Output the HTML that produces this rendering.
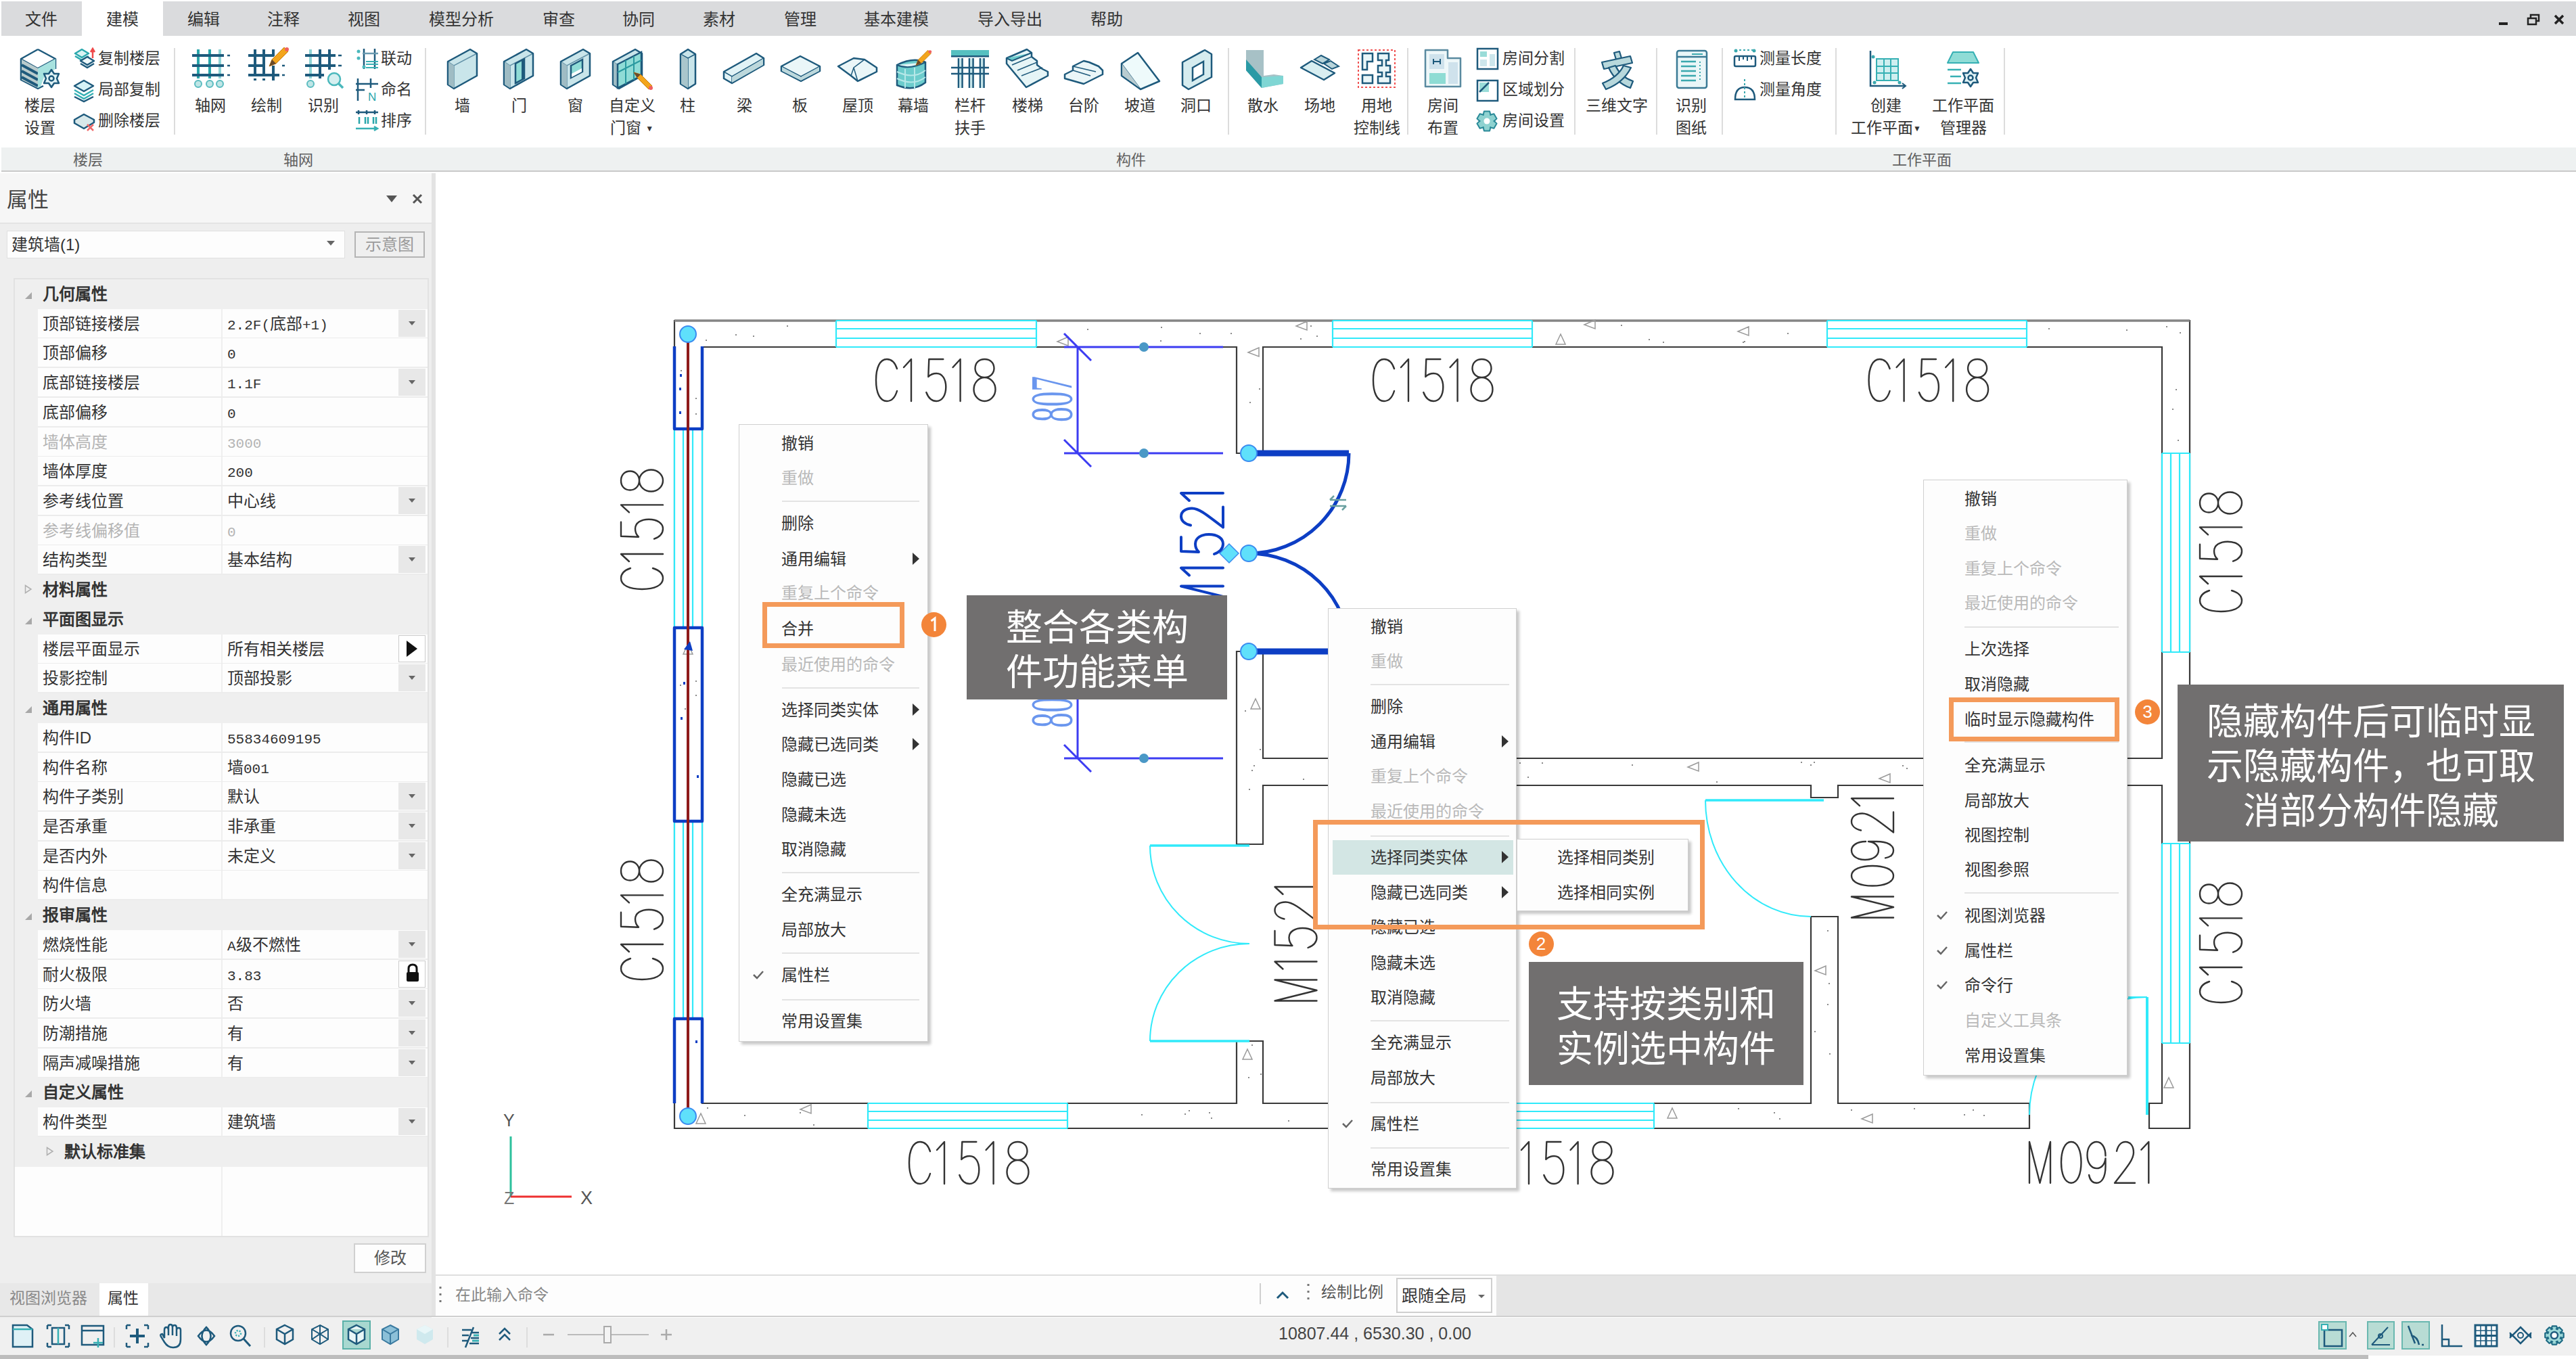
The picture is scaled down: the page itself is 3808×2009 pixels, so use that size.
<!DOCTYPE html>
<html lang="zh-CN"><head><meta charset="utf-8">
<style>
*{margin:0;padding:0;box-sizing:border-box}
html,body{width:3808px;height:2009px;overflow:hidden;background:#fff;font-family:"Liberation Sans",sans-serif;color:#333}
.a{position:absolute}
.t{position:absolute;white-space:nowrap;line-height:1}
#tabs{left:0;top:0;width:3808px;height:54px;background:#fff}
#tabbar{left:2px;top:2px;width:3806px;height:51px;background:#dadbdd}
.tab{position:absolute;top:17px;font-size:24px;color:#333;white-space:nowrap;line-height:24px;font-weight:500}
#ribbon{left:0;top:53px;width:3808px;height:165px;background:#fff}
#grpbar{left:2px;top:218px;width:3806px;height:36px;background:#eef1f1;border-bottom:2px solid #c9c9c9}
.gl{position:absolute;top:226px;font-size:22px;color:#606060;line-height:22px;white-space:nowrap}
.rl{position:absolute;font-size:23px;color:#333;line-height:23px;white-space:nowrap;text-align:center;font-weight:500}
.sep{position:absolute;top:71px;width:2px;height:128px;background:#dcdcdc}
#panel{left:0;top:256px;width:638px;height:1692px;background:#eeeeee}
#phead{left:0;top:256px;width:638px;height:75px;background:#f6f6f6;border-bottom:2px solid #e4e4e4}
#split{left:638px;top:256px;width:6px;height:1690px;background:#e3e3e3}
#canvas{left:644px;top:256px;width:3164px;height:1628px;background:#fff}
.row{position:absolute;left:56px;width:576px;height:42px;background:#fdfdfd}
.cat{position:absolute;left:22px;width:610px;height:44px;background:#efefef}
.pl{position:absolute;left:63px;font-size:24px;line-height:24px;color:#333;white-space:nowrap;font-weight:500}
.pv{position:absolute;left:336px;font-size:24px;line-height:24px;color:#333;white-space:nowrap;font-weight:500}
.pc{position:absolute;left:63px;font-size:24px;line-height:24px;color:#333;font-weight:bold;white-space:nowrap}
.dd{position:absolute;left:589px;width:40px;height:40px;background:#e8e8e8}
.dd:after{content:"";position:absolute;left:15px;top:17px;border-left:5px solid transparent;border-right:5px solid transparent;border-top:6px solid #666}
#cmd{left:644px;top:1884px;width:3164px;height:63px;background:#fdfdfd;border-top:2px solid #dcdcdc;border-bottom:2px solid #c9c9c9}
#status{left:0;top:1948px;width:3808px;height:56px;background:#f0f0f0}
#sbot{left:0;top:2003px;width:3501px;height:6px;background:#bdbdbd}
</style></head><body>

<div id="tabs" class="a"></div>
<div id="tabbar" class="a"></div>
<div class="a" style="left:121px;top:2px;width:120px;height:52px;background:#fff"></div>
<div class="tab" style="left:37px">文件</div>
<div class="tab" style="left:157px">建模</div>
<div class="tab" style="left:277px">编辑</div>
<div class="tab" style="left:395px">注释</div>
<div class="tab" style="left:514px">视图</div>
<div class="tab" style="left:634px">模型分析</div>
<div class="tab" style="left:802px">审查</div>
<div class="tab" style="left:920px">协同</div>
<div class="tab" style="left:1039px">素材</div>
<div class="tab" style="left:1159px">管理</div>
<div class="tab" style="left:1277px">基本建模</div>
<div class="tab" style="left:1445px">导入导出</div>
<div class="tab" style="left:1612px">帮助</div>

<div id="ribbon" class="a"></div>
<div id="grpbar" class="a"></div>
<div class="gl" style="left:108px">楼层</div>
<div class="gl" style="left:419px">轴网</div>
<div class="gl" style="left:1650px">构件</div>
<div class="gl" style="left:2797px">工作平面</div>

<div id="panel" class="a"></div>
<div id="phead" class="a"></div>
<div id="split" class="a"></div>
<div id="canvas" class="a"></div>
<div id="cmd" class="a"></div>
<div id="status" class="a"></div>
<div id="sbot" class="a"></div>

<svg class="a" style="left:0;top:0" width="3808" height="256" viewBox="0 0 3808 256">

<!-- 楼层设置 -->
<g transform="translate(30,72)">
<path d="M26,1 L52,15 L52,30 M26,1 L1,15 L1,46 L26,59 L34,55" fill="none" stroke="#1e5a7c" stroke-width="2.5" stroke-linejoin="round"/>
<path d="M1,15 L26,29 L52,15" fill="none" stroke="#1e5a7c" stroke-width="2"/>
<path d="M2,16 L26,29 L26,58 L2,46Z" fill="#b9cbcc"/>
<path d="M2,24 L26,37 M2,33 L26,46 M2,42 L26,55" stroke="#1e5a7c" stroke-width="4"/>
<path d="M26,29 L52,15 L52,30 L36,40 L30,56 L26,58Z" fill="#a7e2df"/>
<g transform="translate(46,44)"><path d="M0,-13 L4,-7 L11,-7 L8,0 L11,7 L4,7 L0,13 L-4,7 L-11,7 L-8,0 L-11,-7 L-4,-7Z" fill="#dff2f5" stroke="#1e5a7c" stroke-width="2.5" stroke-linejoin="round"/><circle r="3.5" fill="none" stroke="#1e5a7c" stroke-width="2.5"/></g>
</g>
<!-- small floor icons -->
<g transform="translate(108,70)">
<path d="M3,9 L13,3 L23,9 L13,15Z M3,13 L13,19 L23,13" fill="#d9f3f3" stroke="#2aa8ad" stroke-width="2.5" stroke-linejoin="round"/>
<path d="M11,20 L21,14 L31,20 L21,26Z M11,24 L21,30 L31,24" fill="#eef8fa" stroke="#1e5a7c" stroke-width="2.5" stroke-linejoin="round"/>
<path d="M29,16 L29,3 M26,7 L29,2 L32,7" stroke="#ef4a4a" stroke-width="2.5" fill="none"/>
</g>
<g transform="translate(108,117)">
<path d="M2,10 L16,2 L30,10 L16,18Z" fill="#d6f2f6" stroke="#1e5a7c" stroke-width="2.5" stroke-linejoin="round"/>
<path d="M2,16 L16,24 L30,16 M2,21 L16,29 L30,21" fill="none" stroke="#36b0b4" stroke-width="2.5"/>
<path d="M2,26 L16,33 L30,26" fill="none" stroke="#1e5a7c" stroke-width="2.5"/>
</g>
<g transform="translate(108,164)">
<path d="M2,13 L16,5 L31,13 L31,17 L16,26 L2,18Z" fill="#d8e8ea" stroke="#1e5a7c" stroke-width="2.5" stroke-linejoin="round"/>
<path d="M21,20 L30,29 M30,20 L21,29" stroke="#f06a6a" stroke-width="2.5"/>
</g>
<rect x="257" y="71" width="2" height="128" fill="#dcdcdc"/>
<!-- 轴网 -->
<g transform="translate(284,73)" stroke-width="4">
<path d="M9,0 V43 M26,0 V43" stroke="#2aa6ab"/><path d="M41,0 V43" stroke="#8fd4d6"/>
<path d="M0,9 H47 M0,24 H47 M0,38 H47" stroke="#1e5a7c"/>
<path d="M52,9 H56 M52,24 H56 M52,38 H56" stroke="#1e5a7c" stroke-width="2.5"/>
<circle cx="9" cy="51" r="5" fill="#bfe6e6" stroke="#5bbcc0" stroke-width="2"/><circle cx="26" cy="51" r="5" fill="#bfe6e6" stroke="#5bbcc0" stroke-width="2"/><circle cx="41" cy="51" r="5" fill="#bfe6e6" stroke="#5bbcc0" stroke-width="2"/>
</g>
<!-- 绘制 -->
<g transform="translate(367,73)" stroke-width="4">
<path d="M10,0 V46 M23,0 V46 M37,0 V10 M37,24 V46" stroke="#1e5a7c" stroke-dasharray="40 3 4 3"/>
<path d="M0,9 H38 M0,24 H25 M0,38 H46" stroke="#1e5a7c"/>
<path d="M50,24 H54 M50,38 H54" stroke="#1e5a7c" stroke-width="2.5"/>
<g transform="translate(31,3)"><path d="M0,22 L4,12 L22,-6 L28,0 L10,18 Z" fill="#f3a51c" stroke="#c77d10" stroke-width="1"/><path d="M0,22 L4,12 L10,18Z" fill="#6b4a2a"/><circle cx="26" cy="-3" r="3" fill="#f06060"/></g>
</g>
<!-- 识别 -->
<g transform="translate(451,73)" stroke-width="4">
<path d="M8,0 V43" stroke="#8fd4d6"/><path d="M22,0 V43 M36,0 V30" stroke="#1e5a7c"/>
<path d="M0,9 H45 M0,24 H45 M0,38 H28" stroke="#1e5a7c"/>
<path d="M49,9 H54 M49,24 H54" stroke="#1e5a7c" stroke-width="2.5"/>
<circle cx="8" cy="51" r="5" fill="#bfe6e6" stroke="#5bbcc0" stroke-width="2"/>
<circle cx="43" cy="44" r="9" fill="#d6eff0" stroke="#4ab8bc" stroke-width="2.5"/><path d="M49,50 L56,57" stroke="#4ab8bc" stroke-width="3.5"/>
</g>
<!-- 联动 命名 排序 -->
<g transform="translate(526,72)">
<path d="M12,0 V30 M28,0 V30" stroke="#1e5a7c" stroke-width="2.5"/><path d="M10,7 H33" stroke="#6a9ab0" stroke-width="2.5"/>
<circle cx="4" cy="4" r="2.5" fill="#4ab8bc"/><circle cx="4" cy="14" r="2.5" fill="#4ab8bc"/><circle cx="12" cy="27" r="2.5" fill="#4ab8bc"/>
<path d="M15,19 H33 M15,23 H33 M15,28 H33" stroke="#3ab0b4" stroke-width="2"/>
</g>
<g transform="translate(526,116)">
<path d="M3,0 V33 M22,0 V14 M0,8 H33 M0,17 H13" stroke="#1e5a7c" stroke-width="2.5"/>
<text x="18" y="33" font-family="Liberation Sans" font-size="17" fill="#2aa6ab">N</text>
</g>
<g transform="translate(526,163)">
<path d="M0,3 H33" stroke="#1e5a7c" stroke-width="2.5"/><path d="M4,0 V6 M16,0 V6 M28,0 V6" stroke="#1e5a7c" stroke-width="2.5"/>
<path d="M5,10 V20 M14,10 V20 M18,10 V20 M26,10 V20 M30,10 V20" stroke="#2aa6ab" stroke-width="2.5"/>
<path d="M0,27 H31 M27,24 L32,27 L27,30" stroke="#36b0b4" stroke-width="2.5" fill="none"/>
</g>
<rect x="628" y="71" width="2" height="128" fill="#dcdcdc"/>
<!-- 墙 门 窗 -->
<g transform="translate(660,72)"><path d="M2,19 L35,1 L45,7 L45,40 L11,59 L2,53 Z" fill="#c9e5ea" stroke="#1e5a7c" stroke-width="2.5" stroke-linejoin="round"/><path d="M2,19 L11,25 L45,7 M11,25 L11,59" fill="none" stroke="#1e5a7c" stroke-width="1.5" opacity=".6"/><path d="M3,20 L11,25 L11,58 L3,53Z" fill="#9fbcc4"/></g>
<g transform="translate(743,72)"><g><path d="M2,19 L35,1 L45,7 L45,40 L11,59 L2,53 Z" fill="#c9e5ea" stroke="#1e5a7c" stroke-width="2.5" stroke-linejoin="round"/><path d="M2,19 L11,25 L45,7 M11,25 L11,59" fill="none" stroke="#1e5a7c" stroke-width="1.5" opacity=".6"/><path d="M3,20 L11,25 L11,58 L3,53Z" fill="#9fbcc4"/></g><path d="M19,22 L32,15 L32,44 L19,51Z" fill="#8fdcd6" stroke="#1e5a7c" stroke-width="2.5"/><path d="M28,17 L32,15 L32,44 L28,46Z" fill="#1e5a7c"/></g>
<g transform="translate(827,72)"><g><path d="M2,19 L35,1 L45,7 L45,40 L11,59 L2,53 Z" fill="#c9e5ea" stroke="#1e5a7c" stroke-width="2.5" stroke-linejoin="round"/><path d="M2,19 L11,25 L45,7 M11,25 L11,59" fill="none" stroke="#1e5a7c" stroke-width="1.5" opacity=".6"/><path d="M3,20 L11,25 L11,58 L3,53Z" fill="#9fbcc4"/></g><path d="M17,25 L34,16 L34,34 L17,43Z" fill="#8fdcd6" stroke="#1e5a7c" stroke-width="2.5"/><path d="M18,37 L33,29 L33,34 L18,42Z" fill="#fff"/></g>
<g transform="translate(904,72)"><g><path d="M2,19 L35,1 L45,7 L45,40 L11,59 L2,53 Z" fill="#c9e5ea" stroke="#1e5a7c" stroke-width="2.5" stroke-linejoin="round"/><path d="M2,19 L11,25 L45,7 M11,25 L11,59" fill="none" stroke="#1e5a7c" stroke-width="1.5" opacity=".6"/><path d="M3,20 L11,25 L11,58 L3,53Z" fill="#9fbcc4"/></g><path d="M9,23 L44,5 L44,40 L9,58Z" fill="#8fdcd6" stroke="#1e5a7c" stroke-width="2.5"/><path d="M9,35 L44,17 M21,17 L21,52 M33,11 L33,46" stroke="#2a9aa0" stroke-width="2"/><g transform="translate(33,35)"><path d="M0,0 L10,3 L27,20 L22,25 L5,8 Z" fill="#f3a51c" stroke="#c77d10" stroke-width="1"/><path d="M0,0 L10,3 L5,8Z" fill="#6b4a2a"/><circle cx="25" cy="23" r="3" fill="#f06060"/></g></g>
<!-- 柱 梁 板 屋顶 -->
<g transform="translate(1004,72)"><path d="M2,8 L13,1 L24,8 L24,52 L13,59 L2,52Z" fill="#c9e5ea" stroke="#1e5a7c" stroke-width="2.5" stroke-linejoin="round"/><path d="M2,8 L13,14 L24,8 M13,14 V59" fill="none" stroke="#1e5a7c" stroke-width="1.5"/><path d="M3,9 L13,15 L13,58 L3,52Z" fill="#a9c6cc"/></g>
<g transform="translate(1069,76)"><path d="M1,30 L49,3 L60,10 L60,20 L13,47 L1,40Z" fill="#e2f3f6" stroke="#1e5a7c" stroke-width="2.5" stroke-linejoin="round"/><path d="M1,30 L13,37 L60,10 M13,37 V47" fill="none" stroke="#1e5a7c" stroke-width="1.5"/><path d="M13,38 L59,11 L59,20 L13,46Z" fill="#bcd8dc"/></g>
<g transform="translate(1154,76)"><path d="M1,22 L29,7 L58,22 L58,29 L30,44 L1,29Z" fill="#eaf6f8" stroke="#1e5a7c" stroke-width="2.5" stroke-linejoin="round"/><path d="M1,22 L30,37 L58,22 M30,37 V44" fill="none" stroke="#1e5a7c" stroke-width="1.5"/><path d="M2,23 L30,38 L57,23 L57,29 L30,43 L2,29Z" fill="#bcd8dc"/></g>
<g transform="translate(1238,80)"><path d="M1,18 L24,6 L40,8 L58,20 L58,26 L30,40 L20,32Z" fill="#eaf6f8" stroke="#1e5a7c" stroke-width="2.5" stroke-linejoin="round"/><path d="M40,8 L24,20 L30,40 M20,32 L24,20" fill="none" stroke="#1e5a7c" stroke-width="1.5"/></g>
<!-- 幕墙 -->
<g transform="translate(1324,74)"><path d="M2,22 Q26,10 44,18 L44,48 Q26,62 2,52Z" fill="#6ccccc" stroke="#1e5a7c" stroke-width="2.5"/><path d="M2,32 Q26,44 44,30 M2,42 Q26,54 44,40 M14,28 V56 M28,26 V58" stroke="#b6e8e8" stroke-width="2" fill="none"/><path d="M2,22 Q20,30 44,18" fill="#dff3f5" stroke="#1e5a7c" stroke-width="2"/><g transform="translate(30,5) scale(.8)"><path d="M0,22 L4,12 L22,-6 L28,0 L10,18 Z" fill="#f3a51c" stroke="#c77d10" stroke-width="1"/><path d="M0,22 L4,12 L10,18Z" fill="#6b4a2a"/><circle cx="26" cy="-3" r="3" fill="#f06060"/></g></g>
<!-- 栏杆扶手 -->
<g transform="translate(1406,74)"><rect x="0" y="0" width="56" height="10" fill="#56c0c0"/><rect x="0" y="8" width="56" height="2.5" fill="#1e5a7c"/><path d="M11,12 V56 M16.5,12 V56 M27,12 V56 M32.5,12 V56 M43,12 V56 M48.5,12 V56" stroke="#1e5a7c" stroke-width="2.6"/><path d="M13.7,12 V56 M29.7,12 V56 M45.7,12 V56" stroke="#c6e6ea" stroke-width="2.8"/><path d="M0,26 H56 M0,35 H56" stroke="#1e5a7c" stroke-width="2.6"/></g>
<!-- 楼梯 -->
<g transform="translate(1487,72)"><path d="M1,14 L31,1 L38,6 L38,12 L46,18 L46,24 L54,30 L62,34 L62,40 L30,57 L1,22Z" fill="#e6f5f7" stroke="#1e5a7c" stroke-width="2.5" stroke-linejoin="round"/><path d="M1,14 L9,18 L38,6" fill="#6ccccc" stroke="#1e5a7c" stroke-width="2"/><path d="M9,24 L38,12 M17,32 L46,20 M23,40 L54,28" stroke="#1e5a7c" stroke-width="1.5"/></g>
<!-- 台阶 -->
<g transform="translate(1572,80)"><path d="M2,30 L14,24 L14,18 L30,10 L38,12 L52,18 L58,24 L58,30 L30,44 L2,36Z" fill="#eaf6f8" stroke="#1e5a7c" stroke-width="2.5" stroke-linejoin="round"/><path d="M14,24 L40,32 M14,18 L48,26" stroke="#1e5a7c" stroke-width="1.5"/></g>
<!-- 坡道 -->
<g transform="translate(1656,74)"><path d="M2,20 L26,4 L58,46 L30,58 L2,38Z" fill="#eefafb" stroke="#1e5a7c" stroke-width="2.5" stroke-linejoin="round"/><path d="M2,20 L30,58" stroke="#1e5a7c" stroke-width="1.5"/><path d="M3,21 L29,56 L3,37Z" fill="#b9ccd0"/></g>
<!-- 洞口 -->
<g transform="translate(1747,72)"><path d="M1,20 L34,2 L44,8 L44,42 L10,60 L1,54Z" fill="#d6ecef" stroke="#1e5a7c" stroke-width="2.5" stroke-linejoin="round"/><path d="M16,28 L32,19 L32,38 L16,47Z" fill="#fff" stroke="#1e5a7c" stroke-width="2.5"/></g>
<rect x="1815" y="71" width="2" height="128" fill="#dcdcdc"/>
<!-- 散水 -->
<g transform="translate(1841,74)"><path d="M1,0 H27 V38 L42,36 L56,38 V50 L24,56 L1,30Z" fill="#a7c1c6"/><path d="M1,14 L24,40 L24,56 L1,30Z" fill="#2a9aa5"/><path d="M24,40 L56,38 L56,50 L24,56Z" fill="#7fd6d4"/></g>
<!-- 场地 -->
<g transform="translate(1923,80)"><path d="M0,20 L16,10 L50,28 L34,38Z" fill="#d8eef1" stroke="#1e5a7c" stroke-width="2.5" stroke-linejoin="round"/><path d="M20,8 L30,2 L42,8 L32,14Z M34,14 L44,10 L56,18 L46,22Z" fill="#b8d4da" stroke="#1e5a7c" stroke-width="2"/></g>
<!-- 用地控制线 -->
<g transform="translate(2007,73)"><rect x="1" y="1" width="54" height="55" fill="none" stroke="#f05050" stroke-width="2" stroke-dasharray="3 3"/><path d="M7,6 H22 V18 H14 V30 H7Z M30,6 H46 V16 H42 V24 H48 V34 H42 V40 H48 V50 H30 V40 H36 V34 H30 V24 H36 V16 H30Z M7,38 H22 V50 H7Z" fill="#eaf6f8" stroke="#1e5a7c" stroke-width="2.5"/></g>
<rect x="2080" y="71" width="2" height="128" fill="#dcdcdc"/>
<!-- 房间布置 -->
<g transform="translate(2105,72)"><path d="M2,2 H35 V14 H54 V56 H2Z" fill="#eef7f9" stroke="#5a8aa0" stroke-width="2.5" stroke-linejoin="round"/><rect x="8" y="8" width="22" height="22" fill="#cfe2ec"/><rect x="8" y="36" width="24" height="16" fill="#8edcd4"/><rect x="36" y="20" width="14" height="32" fill="#cfe2ec"/><path d="M14,19 H24 M14,15 V23 M24,15 V23" stroke="#1e5a7c" stroke-width="2"/></g>
<g transform="translate(2182,70)"><rect x="2" y="2" width="30" height="30" fill="#fff" stroke="#1e5a7c" stroke-width="2.5"/><rect x="6" y="6" width="10" height="8" fill="#9adcd8"/><rect x="6" y="18" width="10" height="10" fill="#cde6ec"/><rect x="20" y="10" width="8" height="18" fill="#cde6ec"/></g>
<g transform="translate(2182,117)"><rect x="2" y="2" width="30" height="30" fill="#fff" stroke="#1e5a7c" stroke-width="2.5"/><path d="M5,5 H19 V19 H5Z" fill="#9adcd8"/><path d="M5,19 L19,5" stroke="#1e5a7c" stroke-width="2.5"/></g>
<g transform="translate(2198,179)"><path d="M-4.1,-14.4 L4.1,-14.4 L5.5,-9.0 L5.0,-9.2 L10.4,-10.8 L14.6,-3.6 L10.5,0.3 L10.5,-0.3 L14.6,3.6 L10.4,10.8 L5.0,9.2 L5.5,9.0 L4.1,14.4 L-4.1,14.4 L-5.5,9.0 L-5.0,9.2 L-10.4,10.8 L-14.6,3.6 L-10.5,-0.3 L-10.5,0.3 L-14.6,-3.6 L-10.4,-10.8 L-5.0,-9.2 L-5.5,-9.0Z" fill="#8ed2d0" stroke="#2a8a98" stroke-width="2" stroke-linejoin="round"/><circle r="4.5" fill="#fff"/></g>
<rect x="2327" y="71" width="2" height="128" fill="#dcdcdc"/>
<!-- 三维文字 -->
<g transform="translate(2366,76)" fill="#b8d8dc" stroke="#1e5a7c" stroke-width="2.2" stroke-linejoin="round"><path d="M20,2 L28,0 L31,10 L23,12Z"/><path d="M2,16 L44,7 L47,17 L5,26Z"/><path d="M12,24 L22,21 Q30,38 48,44 L44,54 Q22,46 12,24Z"/><path d="M34,21 L45,24 Q34,46 8,56 L3,47 Q26,38 34,21Z"/></g>
<rect x="2448" y="71" width="2" height="128" fill="#dcdcdc"/>
<!-- 识别图纸 -->
<g transform="translate(2477,73)"><rect x="2" y="2" width="44" height="55" rx="3" fill="#eaf6f8" stroke="#3a7a95" stroke-width="2.5"/><path d="M2,11 H46" stroke="#3a7a95" stroke-width="2.5"/><path d="M8,18 H30 M8,25 H30 M8,32 H30 M8,39 H30 M8,46 H30" stroke="#3aa8ae" stroke-width="2.5"/><path d="M36,18 V48" stroke="#3aa8ae" stroke-width="2" stroke-dasharray="2 3"/><path d="M24,7 H40" stroke="#3aa8ae" stroke-width="2"/></g>
<rect x="2545" y="71" width="2" height="128" fill="#dcdcdc"/>
<!-- 测量 -->
<g transform="translate(2563,72)"><path d="M2,2 H31" stroke="#3aa8ae" stroke-width="2" stroke-dasharray="3 3"/><circle cx="3" cy="3" r="2.5" fill="#3aa8ae"/><circle cx="30" cy="3" r="2.5" fill="#3aa8ae"/><rect x="1" y="11" width="31" height="15" rx="2" fill="#fff" stroke="#1e5a7c" stroke-width="2.5"/><path d="M8,11 V18 M14,11 V16 M20,11 V18 M26,11 V16" stroke="#1e5a7c" stroke-width="2"/></g>
<g transform="translate(2563,117)"><path d="M2,30 Q2,12 16,12 Q31,12 31,30Z" fill="#fff" stroke="#1e5a7c" stroke-width="2.5"/><path d="M16,0 V28" stroke="#3aa8ae" stroke-width="2" stroke-dasharray="3 3"/></g>
<rect x="2713" y="71" width="2" height="128" fill="#dcdcdc"/>
<!-- 创建工作平面 -->
<g transform="translate(2761,75)"><path d="M4,0 V52 H55" fill="none" stroke="#1e5a7c" stroke-width="2.5"/><path d="M51,48 L56,52 L51,56" fill="none" stroke="#1e5a7c" stroke-width="2"/><rect x="13" y="12" width="32" height="32" fill="#cfeff0" stroke="#36b0b4" stroke-width="2"/><path d="M13,23 H45 M13,33 H45 M24,12 V44 M34,12 V44" stroke="#36b0b4" stroke-width="2"/><circle cx="8" cy="9" r="2.5" fill="#3aa8ae"/><circle cx="10" cy="47" r="2.5" fill="#3aa8ae"/><circle cx="47" cy="47" r="2.5" fill="#3aa8ae"/></g>
<!-- 工作平面管理器 -->
<g transform="translate(2877,75)"><path d="M10,2 H40 L48,18 H2Z" fill="#8fdcd6" stroke="#36b0b4" stroke-width="2" stroke-linejoin="round"/><path d="M2,28 H22 M6,38 H22 M2,48 H22" stroke="#36b0b4" stroke-width="2.5"/><g transform="translate(36,40)"><path d="M0,-13 L4,-7 L11,-7 L8,0 L11,7 L4,7 L0,13 L-4,7 L-11,7 L-8,0 L-11,-7 L-4,-7Z" fill="#dff2f5" stroke="#1e5a7c" stroke-width="2.5" stroke-linejoin="round"/><circle r="3.5" fill="none" stroke="#1e5a7c" stroke-width="2.5"/></g></g>
<rect x="2962" y="71" width="2" height="128" fill="#dcdcdc"/>
<!-- window controls -->
<path d="M3694,35 H3707" stroke="#222" stroke-width="4"/>
<g fill="none" stroke="#222" stroke-width="2.5"><rect x="3737" y="27" width="12" height="9"/><path d="M3741,27 V22 H3753 V31 H3749"/></g>
<path d="M3777,23 L3789,35 M3789,23 L3777,35" stroke="#222" stroke-width="3.5"/>
</svg>
<div class="rl" style="left:35px;top:145px;width:48px">楼层</div>
<div class="rl" style="left:35px;top:178px;width:48px">设置</div>
<div class="rl" style="left:145px;top:75px">复制楼层</div>
<div class="rl" style="left:145px;top:121px">局部复制</div>
<div class="rl" style="left:145px;top:167px">删除楼层</div>
<div class="rl" style="left:287px;top:145px;width:48px">轴网</div>
<div class="rl" style="left:370px;top:145px;width:48px">绘制</div>
<div class="rl" style="left:454px;top:145px;width:48px">识别</div>
<div class="rl" style="left:563px;top:75px">联动</div>
<div class="rl" style="left:563px;top:121px">命名</div>
<div class="rl" style="left:563px;top:167px">排序</div>
<div class="rl" style="left:671px;top:145px;width:24px">墙</div>
<div class="rl" style="left:755px;top:145px;width:24px">门</div>
<div class="rl" style="left:838px;top:145px;width:24px">窗</div>
<div class="rl" style="left:899px;top:145px;width:70px">自定义</div>
<div class="rl" style="left:899px;top:178px;width:70px">门窗 <span style="font-size:12px;vertical-align:middle">▼</span></div>
<div class="rl" style="left:1004px;top:145px;width:24px">柱</div>
<div class="rl" style="left:1088px;top:145px;width:24px">梁</div>
<div class="rl" style="left:1170px;top:145px;width:24px">板</div>
<div class="rl" style="left:1244px;top:145px;width:48px">屋顶</div>
<div class="rl" style="left:1326px;top:145px;width:48px">幕墙</div>
<div class="rl" style="left:1410px;top:145px;width:48px">栏杆</div>
<div class="rl" style="left:1410px;top:178px;width:48px">扶手</div>
<div class="rl" style="left:1495px;top:145px;width:48px">楼梯</div>
<div class="rl" style="left:1578px;top:145px;width:48px">台阶</div>
<div class="rl" style="left:1661px;top:145px;width:48px">坡道</div>
<div class="rl" style="left:1744px;top:145px;width:48px">洞口</div>
<div class="rl" style="left:1843px;top:145px;width:48px">散水</div>
<div class="rl" style="left:1927px;top:145px;width:48px">场地</div>
<div class="rl" style="left:2011px;top:145px;width:48px">用地</div>
<div class="rl" style="left:1999px;top:178px;width:72px">控制线</div>
<div class="rl" style="left:2109px;top:145px;width:48px">房间</div>
<div class="rl" style="left:2109px;top:178px;width:48px">布置</div>
<div class="rl" style="left:2221px;top:75px">房间分割</div>
<div class="rl" style="left:2221px;top:121px">区域划分</div>
<div class="rl" style="left:2221px;top:167px">房间设置</div>
<div class="rl" style="left:2342px;top:145px;width:96px">三维文字</div>
<div class="rl" style="left:2476px;top:145px;width:48px">识别</div>
<div class="rl" style="left:2476px;top:178px;width:48px">图纸</div>
<div class="rl" style="left:2601px;top:75px">测量长度</div>
<div class="rl" style="left:2601px;top:121px">测量角度</div>
<div class="rl" style="left:2764px;top:145px;width:48px">创建</div>
<div class="rl" style="left:2733px;top:178px;width:110px">工作平面<span style="font-size:12px;vertical-align:middle">▼</span></div>
<div class="rl" style="left:2854px;top:145px;width:96px">工作平面</div>
<div class="rl" style="left:2866px;top:178px;width:72px">管理器</div>
<div class="t" style="left:10px;top:280px;font-size:31px;color:#444;line-height:31px">属性</div>
<svg class="a" style="left:570px;top:286px" width="60" height="20"><path d="M1,3 L17,3 L9,13Z" fill="#555"/><path d="M41,2 L53,14 M53,2 L41,14" stroke="#555" stroke-width="3"/></svg>
<div class="a" style="left:10px;top:341px;width:500px;height:41px;background:#fdfdfd;border:1px solid #e0e0e0"></div>
<div class="t" style="left:17px;top:350px;font-size:24px;line-height:24px;color:#333">建筑墙(1)</div>
<svg class="a" style="left:482px;top:355px" width="14" height="10"><path d="M1,1 L13,1 L7,8Z" fill="#666"/></svg>
<div class="a" style="left:524px;top:342px;width:104px;height:39px;background:#efefef;border:2px solid #b4b4b4"></div>
<div class="t" style="left:540px;top:350px;font-size:24px;line-height:24px;color:#9a9a9a">示意图</div>
<div class="a" style="left:20px;top:411px;width:614px;height:1418px;background:#ececec;border:2px solid #e2e2e2"></div>
<div class="a" style="left:22px;top:1725px;width:610px;height:102px;background:#fdfdfd"></div>
<div class="a" style="left:22px;top:413px;width:34px;height:1312px;background:#efefef"></div>
<div class="a" style="left:327px;top:1725px;width:2px;height:102px;background:#efefef"></div>
<div class="cat" style="top:413px;height:44px"></div>
<svg class="a" style="left:36px;top:431px" width="12" height="12"><path d="M11,1 L11,11 L1,11Z" fill="#a8a8a8"/></svg>
<div class="pc" style="left:63px;top:423px">几何属性</div>
<div class="row" style="top:457px;height:42px"></div>
<div class="a" style="left:327px;top:457px;width:2px;height:42px;background:#efefef"></div>
<div class="pl" style="top:467px;color:#333">顶部链接楼层</div>
<div class="pv" style="top:467px;color:#333"><span style="font-family:'Liberation Mono';font-size:21px">2.2F(</span>底部<span style="font-family:'Liberation Mono';font-size:21px">+1)</span></div>
<div class="dd" style="top:458px"></div>
<div class="row" style="top:500px;height:42px"></div>
<div class="a" style="left:327px;top:500px;width:2px;height:42px;background:#efefef"></div>
<div class="pl" style="top:510px;color:#333">顶部偏移</div>
<div class="pv" style="top:510px;color:#333"><span style="font-family:'Liberation Mono';font-size:21px">0</span></div>
<div class="row" style="top:544px;height:42px"></div>
<div class="a" style="left:327px;top:544px;width:2px;height:42px;background:#efefef"></div>
<div class="pl" style="top:554px;color:#333">底部链接楼层</div>
<div class="pv" style="top:554px;color:#333"><span style="font-family:'Liberation Mono';font-size:21px">1.1F</span></div>
<div class="dd" style="top:545px"></div>
<div class="row" style="top:588px;height:42px"></div>
<div class="a" style="left:327px;top:588px;width:2px;height:42px;background:#efefef"></div>
<div class="pl" style="top:598px;color:#333">底部偏移</div>
<div class="pv" style="top:598px;color:#333"><span style="font-family:'Liberation Mono';font-size:21px">0</span></div>
<div class="row" style="top:632px;height:42px"></div>
<div class="a" style="left:327px;top:632px;width:2px;height:42px;background:#efefef"></div>
<div class="pl" style="top:642px;color:#b4b4b4">墙体高度</div>
<div class="pv" style="top:642px;color:#b4b4b4"><span style="font-family:'Liberation Mono';font-size:21px">3000</span></div>
<div class="row" style="top:675px;height:42px"></div>
<div class="a" style="left:327px;top:675px;width:2px;height:42px;background:#efefef"></div>
<div class="pl" style="top:685px;color:#333">墙体厚度</div>
<div class="pv" style="top:685px;color:#333"><span style="font-family:'Liberation Mono';font-size:21px">200</span></div>
<div class="row" style="top:719px;height:42px"></div>
<div class="a" style="left:327px;top:719px;width:2px;height:42px;background:#efefef"></div>
<div class="pl" style="top:729px;color:#333">参考线位置</div>
<div class="pv" style="top:729px;color:#333">中心线</div>
<div class="dd" style="top:720px"></div>
<div class="row" style="top:763px;height:42px"></div>
<div class="a" style="left:327px;top:763px;width:2px;height:42px;background:#efefef"></div>
<div class="pl" style="top:773px;color:#b4b4b4">参考线偏移值</div>
<div class="pv" style="top:773px;color:#b4b4b4"><span style="font-family:'Liberation Mono';font-size:21px">0</span></div>
<div class="row" style="top:806px;height:42px"></div>
<div class="a" style="left:327px;top:806px;width:2px;height:42px;background:#efefef"></div>
<div class="pl" style="top:816px;color:#333">结构类型</div>
<div class="pv" style="top:816px;color:#333">基本结构</div>
<div class="dd" style="top:807px"></div>
<div class="cat" style="top:850px;height:44px"></div>
<svg class="a" style="left:36px;top:864px" width="12" height="14"><path d="M1.5,1.5 L10,7 L1.5,12.5Z" fill="none" stroke="#b0b0b0" stroke-width="1.5"/></svg>
<div class="pc" style="left:63px;top:860px">材料属性</div>
<div class="cat" style="top:894px;height:44px"></div>
<svg class="a" style="left:36px;top:912px" width="12" height="12"><path d="M11,1 L11,11 L1,11Z" fill="#a8a8a8"/></svg>
<div class="pc" style="left:63px;top:904px">平面图显示</div>
<div class="row" style="top:938px;height:42px"></div>
<div class="a" style="left:327px;top:938px;width:2px;height:42px;background:#efefef"></div>
<div class="pl" style="top:948px;color:#333">楼层平面显示</div>
<div class="pv" style="top:948px;color:#333">所有相关楼层</div>
<div class="a" style="left:589px;top:939px;width:40px;height:40px;background:#fff;border:1px solid #ccc"></div><svg class="a" style="left:597px;top:945px" width="24" height="28"><path d="M4,2 L20,14 L4,26Z" fill="#111"/></svg>
<div class="row" style="top:981px;height:42px"></div>
<div class="a" style="left:327px;top:981px;width:2px;height:42px;background:#efefef"></div>
<div class="pl" style="top:991px;color:#333">投影控制</div>
<div class="pv" style="top:991px;color:#333">顶部投影</div>
<div class="dd" style="top:982px"></div>
<div class="cat" style="top:1025px;height:44px"></div>
<svg class="a" style="left:36px;top:1043px" width="12" height="12"><path d="M11,1 L11,11 L1,11Z" fill="#a8a8a8"/></svg>
<div class="pc" style="left:63px;top:1035px">通用属性</div>
<div class="row" style="top:1069px;height:42px"></div>
<div class="a" style="left:327px;top:1069px;width:2px;height:42px;background:#efefef"></div>
<div class="pl" style="top:1079px;color:#333">构件ID</div>
<div class="pv" style="top:1079px;color:#333"><span style="font-family:'Liberation Mono';font-size:21px">55834609195</span></div>
<div class="row" style="top:1113px;height:42px"></div>
<div class="a" style="left:327px;top:1113px;width:2px;height:42px;background:#efefef"></div>
<div class="pl" style="top:1123px;color:#333">构件名称</div>
<div class="pv" style="top:1123px;color:#333">墙<span style="font-family:'Liberation Mono';font-size:21px">001</span></div>
<div class="row" style="top:1156px;height:42px"></div>
<div class="a" style="left:327px;top:1156px;width:2px;height:42px;background:#efefef"></div>
<div class="pl" style="top:1166px;color:#333">构件子类别</div>
<div class="pv" style="top:1166px;color:#333">默认</div>
<div class="dd" style="top:1157px"></div>
<div class="row" style="top:1200px;height:42px"></div>
<div class="a" style="left:327px;top:1200px;width:2px;height:42px;background:#efefef"></div>
<div class="pl" style="top:1210px;color:#333">是否承重</div>
<div class="pv" style="top:1210px;color:#333">非承重</div>
<div class="dd" style="top:1201px"></div>
<div class="row" style="top:1244px;height:42px"></div>
<div class="a" style="left:327px;top:1244px;width:2px;height:42px;background:#efefef"></div>
<div class="pl" style="top:1254px;color:#333">是否内外</div>
<div class="pv" style="top:1254px;color:#333">未定义</div>
<div class="dd" style="top:1245px"></div>
<div class="row" style="top:1287px;height:42px"></div>
<div class="a" style="left:327px;top:1287px;width:2px;height:42px;background:#efefef"></div>
<div class="pl" style="top:1297px;color:#333">构件信息</div>
<div class="cat" style="top:1331px;height:44px"></div>
<svg class="a" style="left:36px;top:1349px" width="12" height="12"><path d="M11,1 L11,11 L1,11Z" fill="#a8a8a8"/></svg>
<div class="pc" style="left:63px;top:1341px">报审属性</div>
<div class="row" style="top:1375px;height:42px"></div>
<div class="a" style="left:327px;top:1375px;width:2px;height:42px;background:#efefef"></div>
<div class="pl" style="top:1385px;color:#333">燃烧性能</div>
<div class="pv" style="top:1385px;color:#333"><span style="font-family:'Liberation Mono';font-size:21px">A</span>级不燃性</div>
<div class="dd" style="top:1376px"></div>
<div class="row" style="top:1419px;height:42px"></div>
<div class="a" style="left:327px;top:1419px;width:2px;height:42px;background:#efefef"></div>
<div class="pl" style="top:1429px;color:#333">耐火极限</div>
<div class="pv" style="top:1429px;color:#333"><span style="font-family:'Liberation Mono';font-size:21px">3.83</span></div>
<div class="a" style="left:589px;top:1420px;width:40px;height:40px;background:#fff;border:1px solid #ccc"></div><svg class="a" style="left:599px;top:1424px" width="22" height="30"><path d="M5,13 V8 Q5,2 11,2 Q17,2 17,8 V13" fill="none" stroke="#111" stroke-width="3"/><rect x="2" y="13" width="18" height="14" rx="2" fill="#111"/></svg>
<div class="row" style="top:1462px;height:42px"></div>
<div class="a" style="left:327px;top:1462px;width:2px;height:42px;background:#efefef"></div>
<div class="pl" style="top:1472px;color:#333">防火墙</div>
<div class="pv" style="top:1472px;color:#333">否</div>
<div class="dd" style="top:1463px"></div>
<div class="row" style="top:1506px;height:42px"></div>
<div class="a" style="left:327px;top:1506px;width:2px;height:42px;background:#efefef"></div>
<div class="pl" style="top:1516px;color:#333">防潮措施</div>
<div class="pv" style="top:1516px;color:#333">有</div>
<div class="dd" style="top:1507px"></div>
<div class="row" style="top:1550px;height:42px"></div>
<div class="a" style="left:327px;top:1550px;width:2px;height:42px;background:#efefef"></div>
<div class="pl" style="top:1560px;color:#333">隔声减噪措施</div>
<div class="pv" style="top:1560px;color:#333">有</div>
<div class="dd" style="top:1551px"></div>
<div class="cat" style="top:1593px;height:44px"></div>
<svg class="a" style="left:36px;top:1611px" width="12" height="12"><path d="M11,1 L11,11 L1,11Z" fill="#a8a8a8"/></svg>
<div class="pc" style="left:63px;top:1603px">自定义属性</div>
<div class="row" style="top:1637px;height:42px"></div>
<div class="a" style="left:327px;top:1637px;width:2px;height:42px;background:#efefef"></div>
<div class="pl" style="top:1647px;color:#333">构件类型</div>
<div class="pv" style="top:1647px;color:#333">建筑墙</div>
<div class="dd" style="top:1638px"></div>
<div class="cat" style="top:1681px;height:44px"></div>
<svg class="a" style="left:68px;top:1695px" width="12" height="14"><path d="M1.5,1.5 L10,7 L1.5,12.5Z" fill="none" stroke="#b0b0b0" stroke-width="1.5"/></svg>
<div class="pc" style="left:95px;top:1691px">默认标准集</div>
<div class="a" style="left:523px;top:1838px;width:107px;height:44px;background:#fdfdfd;border:2px solid #d0d0d0"></div>
<div class="t" style="left:553px;top:1848px;font-size:24px;line-height:24px;color:#555">修改</div>
<div class="a" style="left:0;top:1897px;width:638px;height:48px;background:#e8e8e8"></div>
<div class="a" style="left:147px;top:1897px;width:72px;height:48px;background:#fff"></div>
<div class="t" style="left:14px;top:1908px;font-size:23px;line-height:23px;color:#888">视图浏览器</div>
<div class="t" style="left:159px;top:1908px;font-size:23px;line-height:23px;color:#333">属性</div>
<svg class="a" style="left:644px;top:256px" width="3164" height="1628" viewBox="644 256 3164 1628">
<path d="M997,474 H3237 V1668 H3177 V1631 H3196 V1161 H2717 V1179 H2677 V1161 H1867 V1248 H1828 V963 H1867 V1121 H3196 V513 H1867 V670 H1828 V513 H1038 V1631 H1828 V1539 H1867 V1631 H2677 V1355 H2717 V1631 H3000 V1668 H997 Z" fill="none" stroke="#3a3a3a" stroke-width="2.2"/>
<path d="M997,474 H3237" stroke="#858585" stroke-width="3.4"/>
<rect x="1236" y="474" width="296" height="39" fill="#fff"/><path d="M1236,474 H1532 M1236,486 H1532 M1236,500 H1532 M1236,513 H1532 M1236,474 V513 M1532,474 V513" stroke="#30eafa" stroke-width="2.2" fill="none"/>
<rect x="1970" y="474" width="295" height="39" fill="#fff"/><path d="M1970,474 H2265 M1970,486 H2265 M1970,500 H2265 M1970,513 H2265 M1970,474 V513 M2265,474 V513" stroke="#30eafa" stroke-width="2.2" fill="none"/>
<rect x="2701" y="474" width="295" height="39" fill="#fff"/><path d="M2701,474 H2996 M2701,486 H2996 M2701,500 H2996 M2701,513 H2996 M2701,474 V513 M2996,474 V513" stroke="#30eafa" stroke-width="2.2" fill="none"/>
<rect x="1283" y="1631" width="295" height="37" fill="#fff"/><path d="M1283,1631 H1578 M1283,1643 H1578 M1283,1656 H1578 M1283,1668 H1578 M1283,1631 V1668 M1578,1631 V1668" stroke="#30eafa" stroke-width="2.2" fill="none"/>
<rect x="2150" y="1631" width="295" height="37" fill="#fff"/><path d="M2150,1631 H2445 M2150,1643 H2445 M2150,1656 H2445 M2150,1668 H2445 M2150,1631 V1668 M2445,1631 V1668" stroke="#30eafa" stroke-width="2.2" fill="none"/>
<rect x="997" y="634" width="41" height="294" fill="#fff"/><path d="M997,634 V928 M1010,634 V928 M1024,634 V928 M1038,634 V928 M997,634 H1038 M997,928 H1038" stroke="#30eafa" stroke-width="2.2" fill="none"/>
<rect x="997" y="1214" width="41" height="292" fill="#fff"/><path d="M997,1214 V1506 M1010,1214 V1506 M1024,1214 V1506 M1038,1214 V1506 M997,1214 H1038 M997,1506 H1038" stroke="#30eafa" stroke-width="2.2" fill="none"/>
<rect x="3196" y="670" width="41" height="294" fill="#fff"/><path d="M3196,670 V964 M3209,670 V964 M3222,670 V964 M3237,670 V964 M3196,670 H3237 M3196,964 H3237" stroke="#30eafa" stroke-width="2.2" fill="none"/>
<rect x="3196" y="1247" width="41" height="295" fill="#fff"/><path d="M3196,1247 V1542 M3209,1247 V1542 M3222,1247 V1542 M3237,1247 V1542 M3196,1247 H3237 M3196,1542 H3237" stroke="#30eafa" stroke-width="2.2" fill="none"/>
<path d="M1932,475 L1916,482 L1932,488Z M1861,514 L1845,521 L1861,527Z M2585,483 L2569,490 L2585,496Z M2300,509 L2307,494 L2314,509Z M1579,498 L1563,505 L1579,511Z M1849,1048 L1856,1033 L1863,1048Z M1837,1566 L1844,1551 L1851,1566Z M2511,1127 L2495,1134 L2511,1140Z M2794,1144 L2778,1151 L2794,1157Z M2699,1428 L2683,1435 L2699,1441Z M2465,1653 L2472,1638 L2479,1653Z M2768,1647 L2752,1654 L2768,1660Z M1199,1633 L1183,1640 L1199,1646Z M1029,1661 L1036,1646 L1043,1661Z M3199,1608 L3206,1593 L3213,1608Z M1010,967 L1017,952 L1024,967Z M2358,473 L2342,480 L2358,486Z" fill="none" stroke="#9a9a9a" stroke-width="1.5"/>
<path d="M1087,495 h2 M1113,497 h2 M1163,482 h2 M1043,503 h2 M1607,487 h2 M1819,493 h2 M1773,493 h2 M1716,484 h2 M1715,504 h2 M1922,501 h2 M1937,482 h2 M1946,497 h2 M2396,481 h2 M2642,493 h2 M2578,505 h2 M2576,506 h2 M2437,502 h2 M2458,506 h2 M3202,483 h2 M3028,486 h2 M3222,492 h2 M3143,488 h2 M3216,576 h2 M3211,605 h2 M3219,651 h2 M3222,1221 h2 M3227,1238 h2 M3221,1014 h2 M3228,1230 h2 M3229,1124 h2 M2812,1132 h2 M2968,1143 h2 M2246,1128 h2 M2997,1156 h2 M1987,1150 h2 M2412,1131 h2 M2258,1149 h2 M3022,1127 h2 M2681,1127 h2 M2818,1136 h2 M3033,1155 h2 M2537,1156 h2 M2279,1128 h2 M2662,1127 h2 M2131,1138 h2 M2676,1131 h2 M1926,1152 h2 M1842,659 h2 M1861,575 h2 M1847,595 h2 M1853,1132 h2 M1850,1139 h2 M1862,1108 h2 M1846,1167 h2 M1840,1051 h2 M1863,1588 h2 M1850,1545 h2 M1845,1593 h2 M2682,1525 h2 M2701,1376 h2 M2701,1485 h2 M2703,1454 h2 M2704,1558 h2 M1045,1638 h2 M1202,1663 h2 M1100,1649 h2 M1182,1645 h2 M1787,1645 h2 M1790,1653 h2 M1751,1647 h2 M2020,1637 h2 M1904,1657 h2 M1757,1642 h2 M2038,1643 h2 M1687,1648 h2 M2829,1639 h2 M2622,1645 h2 M2903,1648 h2 M2916,1641 h2 M2630,1654 h2 M2932,1649 h2 M2569,1639 h2 M2736,1641 h2 M1028,612 h2 M1006,548 h2 M1028,589 h2 M1028,1028 h2 M1005,1013 h2 M1028,1007 h2 M1012,1048 h2 M1015,1046 h2" stroke="#8a8a8a" stroke-width="2"/>
<path d="M997,512 V634 H1038 V512 M997,928 V1214 H1038 V928 Z M997,1631 V1506 H1038 V1631" fill="none" stroke="#0d3ec4" stroke-width="4.5" stroke-linejoin="round"/>
<path d="M1017,494 V1650" stroke="#8e1b1b" stroke-width="4"/>
<circle cx="1017" cy="494" r="12" fill="#5fe0fb" stroke="#3a8cf0" stroke-width="2"/><circle cx="1017" cy="1650" r="12" fill="#5fe0fb" stroke="#3a8cf0" stroke-width="2"/>
<path d="M1005,555 h3 M1004,575 h3 M1004,610 h3 M1010,1010 h3 M1006,1062 h3 M1030,1148 h3 M1028,1540 h3" stroke="#0d3ec4" stroke-width="4"/>
<path d="M1011,960 L1020,948 L1024,962Z" fill="#0d3ec4"/>
<path d="M1573,513 H1808 M1573,670 H1808 M1593,513 V670 M1573,493 L1613,533 M1573,650 L1613,690" stroke="#3c3cf2" stroke-width="3" fill="none"/>
<circle cx="1691" cy="513" r="7" fill="#4a98c6"/><circle cx="1691" cy="670" r="7" fill="#4a98c6"/>
<path d="M1573,963 H1808 M1573,1121 H1808 M1593,963 V1121 M1573,943 L1613,983 M1573,1101 L1613,1141" stroke="#3c3cf2" stroke-width="3" fill="none"/>
<circle cx="1691" cy="963" r="7" fill="#4a98c6"/><circle cx="1691" cy="1121" r="7" fill="#4a98c6"/>
<text transform="translate(1584,624) rotate(-90)" font-family="Liberation Serif" font-size="88" fill="#6a96ee" textLength="68" lengthAdjust="spacingAndGlyphs">807</text>
<text transform="translate(1584,1076) rotate(-90)" font-family="Liberation Serif" font-size="88" fill="#6a96ee" textLength="68" lengthAdjust="spacingAndGlyphs">807</text>
<path d="M1846,670 H1994 M1846,963 H1994" stroke="#0d3ec4" stroke-width="9"/>
<path d="M1994,670 A148,148 0 0,1 1846,818 M1846,818 A148,145 0 0,1 1994,963" stroke="#0d3ec4" stroke-width="5" fill="none"/>
<circle cx="1846" cy="670" r="12" fill="#5fe0fb" stroke="#3a8cf0" stroke-width="2"/>
<circle cx="1846" cy="818" r="12" fill="#5fe0fb" stroke="#3a8cf0" stroke-width="2"/>
<circle cx="1846" cy="963" r="12" fill="#5fe0fb" stroke="#3a8cf0" stroke-width="2"/>
<path d="M1817,804 L1831,818 L1817,832 L1803,818Z" fill="#5fe0fb" stroke="#3a8cf0" stroke-width="1.5"/>
<path d="M1966,739 H1990 M1972,733 L1966,739 M1966,748 H1990 M1984,754 L1990,748" stroke="#6aa0a0" stroke-width="2.5" fill="none"/>
<path d="M1700,1250 H1847 M1700,1539 H1847" stroke="#30eafa" stroke-width="3.5"/>
<path d="M1700,1250 A147,145 0 0,0 1847,1395 A147,144 0 0,0 1700,1539" stroke="#30eafa" stroke-width="2" fill="none"/>
<path d="M2521,1183 H2696" stroke="#30eafa" stroke-width="3.5"/><path d="M2521,1183 A156,172 0 0,0 2677,1355" stroke="#30eafa" stroke-width="2" fill="none"/>
<path d="M3174,1474 V1648" stroke="#30eafa" stroke-width="4"/><path d="M3000,1648 A174,174 0 0,1 3174,1474 H3146" stroke="#30eafa" stroke-width="2" fill="none"/>
<g transform="translate(1294,530)" fill="none" stroke="#333" stroke-width="2.4" stroke-linecap="round" stroke-linejoin="round"><g transform="translate(0,0)"><path d="M32,15 C29,6 24,1 17,1 C7,1 1,13 1,32 C1,51 7,63 17,63 C24,63 29,58 32,48"/></g><g transform="translate(42,0)"><path d="M0,13 L11,1 L11,63"/></g><g transform="translate(75.3,0)"><path d="M25,1 L4,1 L3,27 C7,23 11,22 15,22 C24,22 29,31 29,42 C29,55 23,63 15,63 C8,63 3,58 0,50"/></g><g transform="translate(114.6,0)"><path d="M0,13 L11,1 L11,63"/></g><g transform="translate(145.5,0)"><path d="M16,28 C8,28 2,22 2,14.5 C2,6 8,1 16,1 C24,1 30,6 30,14.5 C30,22 24,28 16,28 C7,28 0,36 0,45.5 C0,55 7,63 16,63 C25,63 32,55 32,45.5 C32,36 25,28 16,28Z"/></g></g>
<g transform="translate(2029,530)" fill="none" stroke="#333" stroke-width="2.4" stroke-linecap="round" stroke-linejoin="round"><g transform="translate(0,0)"><path d="M32,15 C29,6 24,1 17,1 C7,1 1,13 1,32 C1,51 7,63 17,63 C24,63 29,58 32,48"/></g><g transform="translate(42,0)"><path d="M0,13 L11,1 L11,63"/></g><g transform="translate(75.3,0)"><path d="M25,1 L4,1 L3,27 C7,23 11,22 15,22 C24,22 29,31 29,42 C29,55 23,63 15,63 C8,63 3,58 0,50"/></g><g transform="translate(114.6,0)"><path d="M0,13 L11,1 L11,63"/></g><g transform="translate(145.5,0)"><path d="M16,28 C8,28 2,22 2,14.5 C2,6 8,1 16,1 C24,1 30,6 30,14.5 C30,22 24,28 16,28 C7,28 0,36 0,45.5 C0,55 7,63 16,63 C25,63 32,55 32,45.5 C32,36 25,28 16,28Z"/></g></g>
<g transform="translate(2761.6,530)" fill="none" stroke="#333" stroke-width="2.4" stroke-linecap="round" stroke-linejoin="round"><g transform="translate(0,0)"><path d="M32,15 C29,6 24,1 17,1 C7,1 1,13 1,32 C1,51 7,63 17,63 C24,63 29,58 32,48"/></g><g transform="translate(42,0)"><path d="M0,13 L11,1 L11,63"/></g><g transform="translate(75.3,0)"><path d="M25,1 L4,1 L3,27 C7,23 11,22 15,22 C24,22 29,31 29,42 C29,55 23,63 15,63 C8,63 3,58 0,50"/></g><g transform="translate(114.6,0)"><path d="M0,13 L11,1 L11,63"/></g><g transform="translate(145.5,0)"><path d="M16,28 C8,28 2,22 2,14.5 C2,6 8,1 16,1 C24,1 30,6 30,14.5 C30,22 24,28 16,28 C7,28 0,36 0,45.5 C0,55 7,63 16,63 C25,63 32,55 32,45.5 C32,36 25,28 16,28Z"/></g></g>
<g transform="translate(1343,1687)" fill="none" stroke="#333" stroke-width="2.4" stroke-linecap="round" stroke-linejoin="round"><g transform="translate(0,0)"><path d="M32,15 C29,6 24,1 17,1 C7,1 1,13 1,32 C1,51 7,63 17,63 C24,63 29,58 32,48"/></g><g transform="translate(42,0)"><path d="M0,13 L11,1 L11,63"/></g><g transform="translate(75.3,0)"><path d="M25,1 L4,1 L3,27 C7,23 11,22 15,22 C24,22 29,31 29,42 C29,55 23,63 15,63 C8,63 3,58 0,50"/></g><g transform="translate(114.6,0)"><path d="M0,13 L11,1 L11,63"/></g><g transform="translate(145.5,0)"><path d="M16,28 C8,28 2,22 2,14.5 C2,6 8,1 16,1 C24,1 30,6 30,14.5 C30,22 24,28 16,28 C7,28 0,36 0,45.5 C0,55 7,63 16,63 C25,63 32,55 32,45.5 C32,36 25,28 16,28Z"/></g></g>
<g transform="translate(2207,1687)" fill="none" stroke="#333" stroke-width="2.4" stroke-linecap="round" stroke-linejoin="round"><g transform="translate(0,0)"><path d="M32,15 C29,6 24,1 17,1 C7,1 1,13 1,32 C1,51 7,63 17,63 C24,63 29,58 32,48"/></g><g transform="translate(42,0)"><path d="M0,13 L11,1 L11,63"/></g><g transform="translate(75.3,0)"><path d="M25,1 L4,1 L3,27 C7,23 11,22 15,22 C24,22 29,31 29,42 C29,55 23,63 15,63 C8,63 3,58 0,50"/></g><g transform="translate(114.6,0)"><path d="M0,13 L11,1 L11,63"/></g><g transform="translate(145.5,0)"><path d="M16,28 C8,28 2,22 2,14.5 C2,6 8,1 16,1 C24,1 30,6 30,14.5 C30,22 24,28 16,28 C7,28 0,36 0,45.5 C0,55 7,63 16,63 C25,63 32,55 32,45.5 C32,36 25,28 16,28Z"/></g></g>
<g transform="translate(3000,1687) scale(1,0.98)" fill="none" stroke="#333" stroke-width="2.4" stroke-linecap="round" stroke-linejoin="round"><g transform="translate(0,0)"><path d="M0,63 L0,1 L15.5,63 L31,1 L31,63"/></g><g transform="translate(47,0)"><path d="M14.75,1 C5,1 0,15 0,32 C0,49 5,63 14.75,63 C24.5,63 29.5,49 29.5,32 C29.5,15 24.5,1 14.75,1Z"/></g><g transform="translate(85.5,0)"><path d="M27,22 C27,9 21,1 14,1 C6,1 0,9 0,21 C0,33 6,41 14,41 C21,41 26,35 27,26 L27,38 C27,55 21,63 14,63 C8,63 4,59 2.6,51"/></g><g transform="translate(126,0)"><path d="M3,15 C5,6 10,1 16,1 C23,1 28,7 28,17 C28,27 20,37 0,63 L30,63"/></g><g transform="translate(165.3,0)"><path d="M0,13 L11,1 L11,63"/></g></g>
<g transform="translate(917,872) rotate(-90)" fill="none" stroke="#333" stroke-width="2.4" stroke-linecap="round" stroke-linejoin="round"><g transform="translate(0,0)"><path d="M32,15 C29,6 24,1 17,1 C7,1 1,13 1,32 C1,51 7,63 17,63 C24,63 29,58 32,48"/></g><g transform="translate(42,0)"><path d="M0,13 L11,1 L11,63"/></g><g transform="translate(75.3,0)"><path d="M25,1 L4,1 L3,27 C7,23 11,22 15,22 C24,22 29,31 29,42 C29,55 23,63 15,63 C8,63 3,58 0,50"/></g><g transform="translate(114.6,0)"><path d="M0,13 L11,1 L11,63"/></g><g transform="translate(145.5,0)"><path d="M16,28 C8,28 2,22 2,14.5 C2,6 8,1 16,1 C24,1 30,6 30,14.5 C30,22 24,28 16,28 C7,28 0,36 0,45.5 C0,55 7,63 16,63 C25,63 32,55 32,45.5 C32,36 25,28 16,28Z"/></g></g>
<g transform="translate(917,1449) rotate(-90)" fill="none" stroke="#333" stroke-width="2.4" stroke-linecap="round" stroke-linejoin="round"><g transform="translate(0,0)"><path d="M32,15 C29,6 24,1 17,1 C7,1 1,13 1,32 C1,51 7,63 17,63 C24,63 29,58 32,48"/></g><g transform="translate(42,0)"><path d="M0,13 L11,1 L11,63"/></g><g transform="translate(75.3,0)"><path d="M25,1 L4,1 L3,27 C7,23 11,22 15,22 C24,22 29,31 29,42 C29,55 23,63 15,63 C8,63 3,58 0,50"/></g><g transform="translate(114.6,0)"><path d="M0,13 L11,1 L11,63"/></g><g transform="translate(145.5,0)"><path d="M16,28 C8,28 2,22 2,14.5 C2,6 8,1 16,1 C24,1 30,6 30,14.5 C30,22 24,28 16,28 C7,28 0,36 0,45.5 C0,55 7,63 16,63 C25,63 32,55 32,45.5 C32,36 25,28 16,28Z"/></g></g>
<g transform="translate(3251,905) rotate(-90)" fill="none" stroke="#333" stroke-width="2.4" stroke-linecap="round" stroke-linejoin="round"><g transform="translate(0,0)"><path d="M32,15 C29,6 24,1 17,1 C7,1 1,13 1,32 C1,51 7,63 17,63 C24,63 29,58 32,48"/></g><g transform="translate(42,0)"><path d="M0,13 L11,1 L11,63"/></g><g transform="translate(75.3,0)"><path d="M25,1 L4,1 L3,27 C7,23 11,22 15,22 C24,22 29,31 29,42 C29,55 23,63 15,63 C8,63 3,58 0,50"/></g><g transform="translate(114.6,0)"><path d="M0,13 L11,1 L11,63"/></g><g transform="translate(145.5,0)"><path d="M16,28 C8,28 2,22 2,14.5 C2,6 8,1 16,1 C24,1 30,6 30,14.5 C30,22 24,28 16,28 C7,28 0,36 0,45.5 C0,55 7,63 16,63 C25,63 32,55 32,45.5 C32,36 25,28 16,28Z"/></g></g>
<g transform="translate(3251,1483) rotate(-90)" fill="none" stroke="#333" stroke-width="2.4" stroke-linecap="round" stroke-linejoin="round"><g transform="translate(0,0)"><path d="M32,15 C29,6 24,1 17,1 C7,1 1,13 1,32 C1,51 7,63 17,63 C24,63 29,58 32,48"/></g><g transform="translate(42,0)"><path d="M0,13 L11,1 L11,63"/></g><g transform="translate(75.3,0)"><path d="M25,1 L4,1 L3,27 C7,23 11,22 15,22 C24,22 29,31 29,42 C29,55 23,63 15,63 C8,63 3,58 0,50"/></g><g transform="translate(114.6,0)"><path d="M0,13 L11,1 L11,63"/></g><g transform="translate(145.5,0)"><path d="M16,28 C8,28 2,22 2,14.5 C2,6 8,1 16,1 C24,1 30,6 30,14.5 C30,22 24,28 16,28 C7,28 0,36 0,45.5 C0,55 7,63 16,63 C25,63 32,55 32,45.5 C32,36 25,28 16,28Z"/></g></g>
<g transform="translate(1745,897.5) rotate(-90)" fill="none" stroke="#0d3ec4" stroke-width="4" stroke-linecap="round" stroke-linejoin="round"><g transform="translate(0,0)"><path d="M0,63 L0,1 L15.5,63 L31,1 L31,63"/></g><g transform="translate(47,0)"><path d="M0,13 L11,1 L11,63"/></g><g transform="translate(78.5,0)"><path d="M25,1 L4,1 L3,27 C7,23 11,22 15,22 C24,22 29,31 29,42 C29,55 23,63 15,63 C8,63 3,58 0,50"/></g><g transform="translate(118,0)"><path d="M3,15 C5,6 10,1 16,1 C23,1 28,7 28,17 C28,27 20,37 0,63 L30,63"/></g><g transform="translate(157.5,0)"><path d="M0,13 L11,1 L11,63"/></g></g>
<g transform="translate(1883.5,1479.5) rotate(-90)" fill="none" stroke="#333" stroke-width="2.4" stroke-linecap="round" stroke-linejoin="round"><g transform="translate(0,0)"><path d="M0,63 L0,1 L15.5,63 L31,1 L31,63"/></g><g transform="translate(47,0)"><path d="M0,13 L11,1 L11,63"/></g><g transform="translate(78.5,0)"><path d="M25,1 L4,1 L3,27 C7,23 11,22 15,22 C24,22 29,31 29,42 C29,55 23,63 15,63 C8,63 3,58 0,50"/></g><g transform="translate(118,0)"><path d="M3,15 C5,6 10,1 16,1 C23,1 28,7 28,17 C28,27 20,37 0,63 L30,63"/></g><g transform="translate(157.5,0)"><path d="M0,13 L11,1 L11,63"/></g></g>
<g transform="translate(2736,1356.5) rotate(-90)" fill="none" stroke="#333" stroke-width="2.4" stroke-linecap="round" stroke-linejoin="round"><g transform="translate(0,0)"><path d="M0,63 L0,1 L15.5,63 L31,1 L31,63"/></g><g transform="translate(47,0)"><path d="M14.75,1 C5,1 0,15 0,32 C0,49 5,63 14.75,63 C24.5,63 29.5,49 29.5,32 C29.5,15 24.5,1 14.75,1Z"/></g><g transform="translate(85.5,0)"><path d="M27,22 C27,9 21,1 14,1 C6,1 0,9 0,21 C0,33 6,41 14,41 C21,41 26,35 27,26 L27,38 C27,55 21,63 14,63 C8,63 4,59 2.6,51"/></g><g transform="translate(126,0)"><path d="M3,15 C5,6 10,1 16,1 C23,1 28,7 28,17 C28,27 20,37 0,63 L30,63"/></g><g transform="translate(165.3,0)"><path d="M0,13 L11,1 L11,63"/></g></g>
<path d="M755,1680 V1769" stroke="#2cc09c" stroke-width="3"/><path d="M755,1769 H845" stroke="#ee3030" stroke-width="3"/>
<text x="744" y="1665" font-family="Liberation Sans" font-size="25" fill="#555">Y</text><text x="858" y="1780" font-family="Liberation Sans" font-size="27" fill="#555">X</text><text x="745" y="1780" font-family="Liberation Sans" font-size="25" fill="#777">Z</text>
</svg>
<style>
.menu{position:absolute;background:#fdfdfd;border:1px solid #cfcfcf;box-shadow:4px 4px 4px rgba(0,0,0,.22)}
.mi{position:absolute;font-size:24px;line-height:24px;color:#333;white-space:nowrap;font-weight:500}
.mg{color:#b9b9b9;font-weight:400}
.ms{position:absolute;height:2px;background:#e3e3e3}
.ma{position:absolute;width:0;height:0;border-top:9px solid transparent;border-bottom:9px solid transparent;border-left:10px solid #333}
.ck{position:absolute;font-size:20px;line-height:20px;color:#555}
.ob{position:absolute;border:7px solid #f49a5a}
.oc{position:absolute;width:36px;height:36px;border-radius:50%;background:#f3853a;color:#fff;font-size:26px;line-height:36px;text-align:center}
.co{position:absolute;background:#716f6f;color:#fff;font-size:54px;line-height:66px;text-align:center;white-space:nowrap;font-weight:500}
</style>
<div class="menu" style="left:1092px;top:627px;width:280px;height:913px"></div>
<div class="mi" style="left:1155px;top:644px">撤销</div>
<div class="mi mg" style="left:1155px;top:695px">重做</div>
<div class="ms" style="left:1156px;top:740px;width:203px"></div>
<div class="mi" style="left:1155px;top:762px">删除</div>
<div class="mi" style="left:1155px;top:815px">通用编辑</div>
<div class="ma" style="left:1349px;top:817px"></div>
<div class="mi mg" style="left:1155px;top:865px">重复上个命令</div>
<div class="mi" style="left:1155px;top:918px">合并</div>
<div class="mi mg" style="left:1155px;top:971px">最近使用的命令</div>
<div class="ms" style="left:1156px;top:1016px;width:203px"></div>
<div class="mi" style="left:1155px;top:1038px">选择同类实体</div>
<div class="ma" style="left:1349px;top:1040px"></div>
<div class="mi" style="left:1155px;top:1089px">隐藏已选同类</div>
<div class="ma" style="left:1349px;top:1091px"></div>
<div class="mi" style="left:1155px;top:1141px">隐藏已选</div>
<div class="mi" style="left:1155px;top:1193px">隐藏未选</div>
<div class="mi" style="left:1155px;top:1244px">取消隐藏</div>
<div class="ms" style="left:1156px;top:1289px;width:203px"></div>
<div class="mi" style="left:1155px;top:1311px">全充满显示</div>
<div class="mi" style="left:1155px;top:1363px">局部放大</div>
<div class="ms" style="left:1156px;top:1408px;width:203px"></div>
<div class="mi" style="left:1155px;top:1430px">属性栏</div>
<svg class="a" style="left:1112px;top:1433px" width="18" height="16"><path d="M2,8 L7,13 L16,3" fill="none" stroke="#666" stroke-width="2.5"/></svg>
<div class="ms" style="left:1156px;top:1477px;width:203px"></div>
<div class="mi" style="left:1155px;top:1498px">常用设置集</div>
<div class="menu" style="left:1963px;top:899px;width:279px;height:858px"></div>
<div class="a" style="left:1970px;top:1242px;width:267px;height:51px;background:#d3e6e4"></div>
<div class="mi" style="left:2026px;top:915px">撤销</div>
<div class="mi mg" style="left:2026px;top:966px">重做</div>
<div class="ms" style="left:2026px;top:1011px;width:205px"></div>
<div class="mi" style="left:2026px;top:1033px">删除</div>
<div class="mi" style="left:2026px;top:1085px">通用编辑</div>
<div class="ma" style="left:2220px;top:1087px"></div>
<div class="mi mg" style="left:2026px;top:1136px">重复上个命令</div>
<div class="mi mg" style="left:2026px;top:1188px">最近使用的命令</div>
<div class="ms" style="left:2026px;top:1235px;width:205px"></div>
<div class="mi" style="left:2026px;top:1256px">选择同类实体</div>
<div class="ma" style="left:2220px;top:1258px"></div>
<div class="mi" style="left:2026px;top:1308px">隐藏已选同类</div>
<div class="ma" style="left:2220px;top:1310px"></div>
<div class="mi" style="left:2026px;top:1359px">隐藏已选</div>
<div class="mi" style="left:2026px;top:1412px">隐藏未选</div>
<div class="mi" style="left:2026px;top:1463px">取消隐藏</div>
<div class="ms" style="left:2026px;top:1508px;width:205px"></div>
<div class="mi" style="left:2026px;top:1530px">全充满显示</div>
<div class="mi" style="left:2026px;top:1582px">局部放大</div>
<div class="ms" style="left:2026px;top:1629px;width:205px"></div>
<div class="mi" style="left:2026px;top:1650px">属性栏</div>
<svg class="a" style="left:1983px;top:1653px" width="18" height="16"><path d="M2,8 L7,13 L16,3" fill="none" stroke="#666" stroke-width="2.5"/></svg>
<div class="ms" style="left:2026px;top:1696px;width:205px"></div>
<div class="mi" style="left:2026px;top:1717px">常用设置集</div>
<div class="menu" style="left:2242px;top:1240px;width:254px;height:107px"></div>
<div class="mi" style="left:2302px;top:1256px">选择相同类别</div><div class="mi" style="left:2302px;top:1308px">选择相同实例</div>
<div class="menu" style="left:2843px;top:709px;width:302px;height:881px"></div>
<div class="mi" style="left:2904px;top:726px">撤销</div>
<div class="mi mg" style="left:2904px;top:777px">重做</div>
<div class="mi mg" style="left:2904px;top:829px">重复上个命令</div>
<div class="mi mg" style="left:2904px;top:880px">最近使用的命令</div>
<div class="ms" style="left:2904px;top:926px;width:228px"></div>
<div class="mi" style="left:2904px;top:948px">上次选择</div>
<div class="mi" style="left:2904px;top:1000px">取消隐藏</div>
<div class="mi" style="left:2904px;top:1052px">临时显示隐藏构件</div>
<div class="ms" style="left:2904px;top:1096px;width:228px"></div>
<div class="mi" style="left:2904px;top:1120px">全充满显示</div>
<div class="mi" style="left:2904px;top:1172px">局部放大</div>
<div class="mi" style="left:2904px;top:1223px">视图控制</div>
<div class="mi" style="left:2904px;top:1274px">视图参照</div>
<div class="ms" style="left:2904px;top:1319px;width:228px"></div>
<div class="mi" style="left:2904px;top:1342px">视图浏览器</div>
<svg class="a" style="left:2862px;top:1345px" width="18" height="16"><path d="M2,8 L7,13 L16,3" fill="none" stroke="#666" stroke-width="2.5"/></svg>
<div class="mi" style="left:2904px;top:1394px">属性栏</div>
<svg class="a" style="left:2862px;top:1397px" width="18" height="16"><path d="M2,8 L7,13 L16,3" fill="none" stroke="#666" stroke-width="2.5"/></svg>
<div class="mi" style="left:2904px;top:1445px">命令行</div>
<svg class="a" style="left:2862px;top:1448px" width="18" height="16"><path d="M2,8 L7,13 L16,3" fill="none" stroke="#666" stroke-width="2.5"/></svg>
<div class="mi mg" style="left:2904px;top:1497px">自定义工具条</div>
<div class="mi" style="left:2904px;top:1549px">常用设置集</div>
<div class="ob" style="left:1127px;top:890px;width:210px;height:68px"></div>
<div class="ob" style="left:1941px;top:1212px;width:579px;height:162px"></div>
<div class="ob" style="left:2881px;top:1031px;width:252px;height:65px"></div>
<div class="oc" style="left:1361.9px;top:904.8px;width:37px;height:37px;line-height:37px"><svg width="37" height="37" style="position:absolute;left:0;top:0"><path d="M14.5,13 L20,9 V28" fill="none" stroke="#fff" stroke-width="3" stroke-linejoin="miter"/></svg></div>
<div class="oc" style="left:2259.5px;top:1376.5px;width:37px;height:37px;line-height:37px">2</div>
<div class="oc" style="left:3156.0px;top:1033.8px;width:37px;height:37px;line-height:37px">3</div>
<div class="co" style="left:1429px;top:880px;width:385px;height:154px;line-height:66px;padding-top:15px">整合各类构<br>件功能菜单</div>
<div class="co" style="left:2260px;top:1422px;width:406px;height:182px;line-height:66px;padding-top:30px">支持按类别和<br>实例选中构件</div>
<div class="co" style="left:3219px;top:1012px;width:571px;height:232px;line-height:66px;padding-top:22px">隐藏构件后可临时显<br>示隐藏构件，也可取<br>消部分构件隐藏</div>
<div class="a" style="left:644px;top:1884px;width:1568px;height:62px;background:#fdfdfd"></div>
<div class="a" style="left:2212px;top:1884px;width:1596px;height:62px;background:#e5e5e5"></div>
<div class="a" style="left:644px;top:1884px;width:3164px;height:2px;background:#dedede"></div>
<div class="a" style="left:0px;top:1945px;width:3808px;height:2px;background:#cfcfcf"></div>
<svg class="a" style="left:644px;top:1884px" width="1600" height="62">
<path d="M7,18 v3 M7,28 v3 M7,38 v3" stroke="#777" stroke-width="3"/>
<path d="M1219,13 V44" stroke="#cfcfcf" stroke-width="2"/>
<path d="M1244,35 L1252,27 L1260,35" fill="none" stroke="#1e5a7c" stroke-width="3"/>
<path d="M1290,14 v3 M1290,24 v3 M1290,34 v3" stroke="#777" stroke-width="3"/>
<rect x="1421" y="6" width="140" height="50" fill="#fff" stroke="#cfcfcf" stroke-width="2"/>
<path d="M1541,30 L1551,30 L1546,35Z" fill="#666"/>
</svg>
<div class="t" style="left:673px;top:1903px;font-size:23px;color:#888">在此输入命令</div>
<div class="t" style="left:1953px;top:1899px;font-size:23px;color:#555">绘制比例</div>
<div class="t" style="left:2072px;top:1904px;font-size:24px;color:#333">跟随全局</div>
<div class="t" style="left:1890px;top:1959px;font-size:25px;color:#444">10807.44 , 6530.30 , 0.00</div>
<svg class="a" style="left:0;top:1948px" width="3808" height="56">
<g fill="none" stroke="#1e5a7c" stroke-width="2.5">
<!-- page -->
<path d="M19,11 H40 L48,17 V43 H19Z" fill="#dff1f6"/>
<path d="M19,17 H48" stroke="#36b0b4"/>
<!-- fit -->
<path d="M70,11 H76 M96,11 H102 M70,43 H76 M96,43 H102 M70,11 V17 M102,11 V17 M70,37 V43 M102,37 V43"/>
<rect x="77" y="15" width="18" height="24" stroke="#1e5a7c"/><path d="M86,15 V39" stroke="#36b0b4"/>
<!-- window add -->
<rect x="121" y="12" width="32" height="28"/><path d="M121,19 H153" /><path d="M145,30 V44 M138,37 H152" stroke="#36b0b4"/>
<path d="M169,14 V44" stroke="#ddd" stroke-width="2"/>
<!-- zoom extents -->
<path d="M187,11 H193 M213,11 H219 M187,43 H193 M213,43 H219 M187,11 V17 M219,11 V17 M187,37 V43 M219,37 V43"/>
<path d="M203,16 V38 M192,27 H214" stroke-width="4"/>
<!-- hand -->
<path d="M243,30 V18 Q243,14 246,14 Q249,14 249,18 V26 V14 Q249,10 252,10 Q255,10 255,14 V26 V14 Q255,11 258,11 Q261,11 261,15 V27 V18 Q261,15 264,15 Q267,15 267,18 V32 Q267,44 256,44 Q248,44 243,36 L238,28 Q236,24 240,24Z"/>
<!-- orbit -->
<path d="M293,27 Q305,10 317,27 Q305,44 293,27Z M305,14 Q318,27 305,40 Q292,27 305,14Z"/>
<!-- zoom -->
<circle cx="352" cy="23" r="11"/><path d="M360,31 L370,42" stroke-width="3"/><circle cx="352" cy="23" r="4" stroke="#36b0b4" stroke-dasharray="2 2"/>
<path d="M391,14 V44" stroke="#ddd" stroke-width="2"/>
<!-- cubes -->
<path d="M421,11 L433,17 V32 L421,39 L409,32 V17Z M409,17 L421,24 L433,17 M421,24 V39"/>
<path d="M473,11 L485,17 V32 L473,39 L461,32 V17Z M461,17 L473,24 L485,17 M473,24 V39 M473,11 V24 M461,32 L473,24 L485,32" stroke-width="2"/>
</g>
<rect x="507" y="5" width="40" height="41" fill="#a8d8d0" stroke="#5ab0a8" stroke-width="2"/>
<path d="M527,11 L539,17 V32 L527,39 L515,32 V17Z M515,17 L527,24 L539,17 M527,24 V39" fill="#e8f6f6" stroke="#1e5a7c" stroke-width="2.5"/>
<path d="M577,11 L589,17 V32 L577,39 L565,32 V17Z" fill="#8cc0d8" stroke="#3a7aa0" stroke-width="2"/><path d="M565,17 L577,24 L589,17 M577,24 V39" fill="none" stroke="#3a7aa0" stroke-width="2"/>
<path d="M628,11 L640,17 V32 L628,39 L616,32 V17Z" fill="#cfe9ee"/><path d="M616,17 L628,24 L640,17 L628,11Z" fill="#e8f6f8"/>
<path d="M662,14 V44" stroke="#ddd" stroke-width="2"/>
<path d="M683,18 H697 M683,26 H693 M683,34 H693 M700,14 L688,44 M696,22 H708 M696,30 H708 M694,38 H708" stroke="#1e5a7c" stroke-width="2.5"/><path d="M700,26 H708 M698,34 H708" stroke="#36b0b4" stroke-width="3"/>
<path d="M738,24 L746,16 L754,24 M738,33 L746,25 L754,33" fill="none" stroke="#1e5a7c" stroke-width="2.5"/>
<path d="M779,14 V44" stroke="#ddd" stroke-width="2"/>
<path d="M803,25 H819" stroke="#aaa" stroke-width="2.5"/>
<path d="M839,25 H959" stroke="#bbb" stroke-width="2"/><rect x="893" y="13" width="10" height="24" fill="#f4f4f4" stroke="#aaa" stroke-width="2"/>
<path d="M977,25 H993 M985,17 V33" stroke="#aaa" stroke-width="2.5"/>
<!-- right icons -->
<rect x="3428" y="6" width="40" height="40" fill="#b8dcd4" stroke="#6ab8b0" stroke-width="2"/>
<rect x="3436" y="18" width="26" height="24" fill="none" stroke="#1e5a7c" stroke-width="2.5"/><rect x="3432" y="10" width="9" height="8" fill="#fff" stroke="#36b0b4" stroke-width="2"/>
<path d="M3473,28 L3478,22 L3483,28" fill="none" stroke="#555" stroke-width="1.5"/>
<rect x="3500" y="6" width="39" height="40" fill="#b8dcd4" stroke="#6ab8b0" stroke-width="2"/>
<path d="M3506,40 H3533 M3506,40 L3530,14" stroke="#1e5a7c" stroke-width="2"/><circle cx="3519" cy="27" r="3" fill="none" stroke="#1e5a7c" stroke-width="2"/>
<rect x="3551" y="6" width="40" height="40" fill="#b8dcd4" stroke="#6ab8b0" stroke-width="2"/>
<path d="M3560,12 L3570,38 M3564,26 Q3574,28 3576,40 M3580,40 h3" stroke="#1e5a7c" stroke-width="2.5" fill="none"/>
<path d="M3610,10 V42 H3640 M3610,32 H3620 V42" fill="none" stroke="#1e5a7c" stroke-width="2.5"/>
<rect x="3659" y="11" width="32" height="31" fill="#fff" stroke="#1e5a7c" stroke-width="3"/><path d="M3659,19 H3691 M3659,34 H3691 M3667,11 V42 M3683,11 V42" stroke="#1e5a7c" stroke-width="1.5"/><path d="M3659,26.5 H3691 M3675,11 V42" stroke="#1e5a7c" stroke-width="3"/>
<path d="M3726,14 L3738,26 L3726,38 L3714,26Z" fill="none" stroke="#1e5a7c" stroke-width="2.5"/><circle cx="3726" cy="26" r="4" fill="none" stroke="#1e5a7c" stroke-width="2"/><path d="M3710,22 L3714,26 L3710,30 M3742,22 L3738,26 L3742,30" fill="#1e5a7c" stroke="#1e5a7c" stroke-width="2"/>
<g transform="translate(3776,26)"><path d="M-3.1,-13.7 L3.1,-13.7 L4.8,-8.8 L2.8,-9.6 L7.5,-11.8 L11.8,-7.5 L9.6,-2.8 L8.8,-4.8 L13.7,-3.1 L13.7,3.1 L8.8,4.8 L9.6,2.8 L11.8,7.5 L7.5,11.8 L2.8,9.6 L4.8,8.8 L3.1,13.7 L-3.1,13.7 L-4.8,8.8 L-2.8,9.6 L-7.5,11.8 L-11.8,7.5 L-9.6,2.8 L-8.8,4.8 L-13.7,3.1 L-13.7,-3.1 L-8.8,-4.8 L-9.6,-2.8 L-11.8,-7.5 L-7.5,-11.8 L-2.8,-9.6 L-4.8,-8.8Z" fill="#9ed8d8" stroke="#1e6a84" stroke-width="2.2" stroke-linejoin="round"/><circle r="5" fill="#fff" stroke="#1e5a7c" stroke-width="2.5"/></g>
</svg>
</body></html>
